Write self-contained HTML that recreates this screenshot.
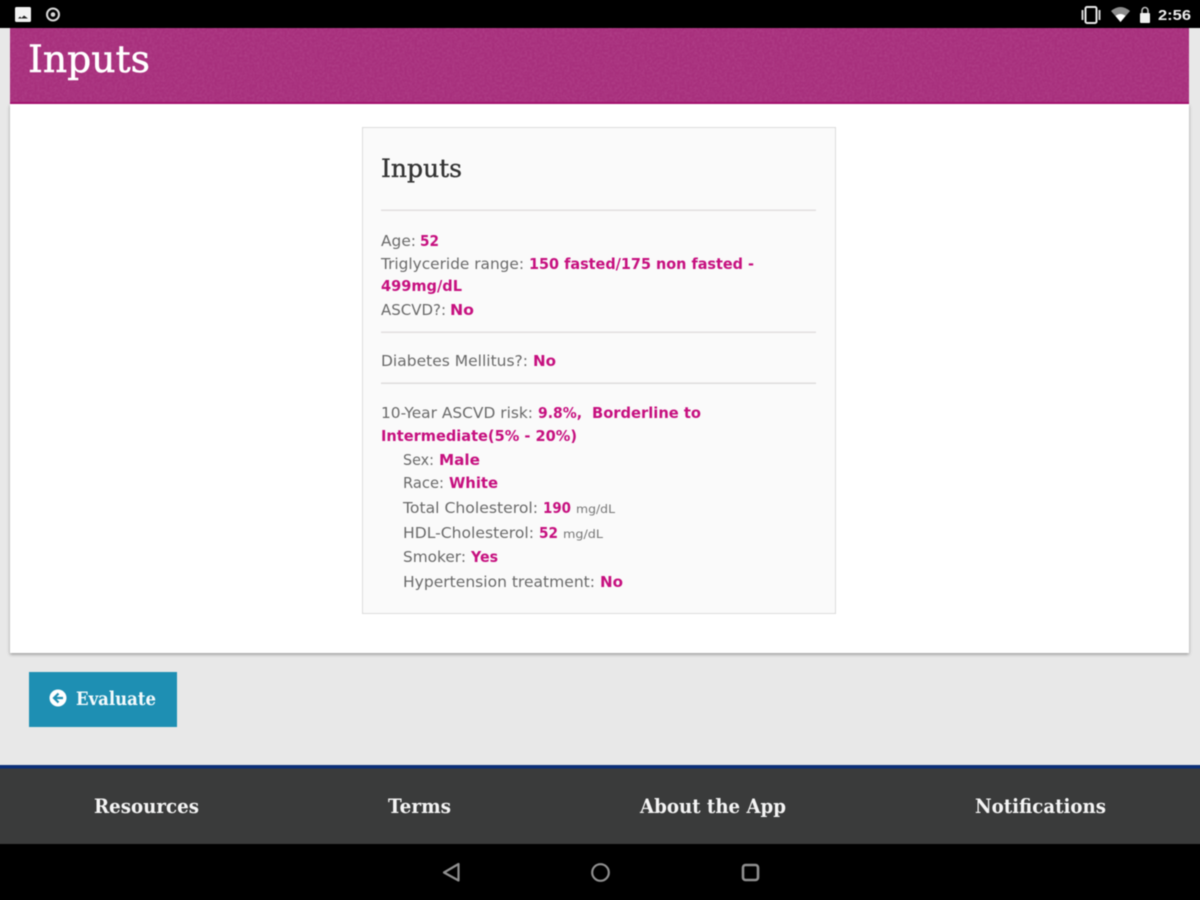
<!DOCTYPE html>
<html>
<head>
<meta charset="utf-8">
<title>Inputs</title>
<style>
html,body{margin:0;padding:0;width:1200px;height:900px;overflow:hidden;background:#e8e8e8}
#wrap{position:relative;width:1200px;height:900px;overflow:hidden}
svg{display:block;position:absolute;left:-6px;top:-6px;filter:blur(.5px)}
.s{font-family:"DejaVu Serif","Liberation Serif",serif}
.b{font-family:"DejaVu Sans","Liberation Sans",sans-serif;font-size:15px;fill:#6a6a6a}
.m{font-family:"DejaVu Sans","Liberation Sans",sans-serif;font-size:15px;font-weight:bold;fill:#c6107f}
.u{font-family:"DejaVu Sans","Liberation Sans",sans-serif;font-size:11.5px;fill:#777}
.f{font-family:"DejaVu Serif","Liberation Serif",serif;font-size:20px;fill:#f4f4f4;font-weight:bold}
</style>
</head>
<body>
<div id="wrap">
<svg width="1212" height="912" viewBox="-6 -6 1212 912" xmlns="http://www.w3.org/2000/svg">
<defs>
<filter id="noise" x="0" y="0" width="100%" height="100%">
<feTurbulence type="fractalNoise" baseFrequency="0.4" numOctaves="2" seed="4"/>
<feColorMatrix values="0 0 0 0 1  0 0 0 0 .6  0 0 0 0 .85  .5 0 0 0 -.16"/>
</filter>
<filter id="sh" x="-2%" y="-2%" width="104%" height="104%">
<feDropShadow dx="0" dy="1.5" stdDeviation="1.5" flood-color="#000" flood-opacity=".35"/>
</filter>
</defs>

<rect x="-6" y="-6" width="1212" height="912" fill="#e8e8e8"/>

<!-- white panel -->
<rect x="10" y="104" width="1179" height="549" fill="#fff" filter="url(#sh)"/>

<!-- header -->
<rect x="10" y="28" width="1179" height="76" fill="#a72f7c"/>
<rect x="10" y="28" width="1179" height="74" filter="url(#noise)" opacity=".35"/>
<rect x="10" y="102" width="1179" height="2" fill="#a3126e"/>
<text class="s" x="28" y="72" font-size="37" fill="#fff" stroke="#fff" stroke-width=".5" textLength="122" lengthAdjust="spacingAndGlyphs">Inputs</text>

<!-- card -->
<rect x="362.500" y="127.500" width="473" height="486" fill="#fafafa" stroke="#dcdcdc"/>
<text class="s" x="381" y="177" font-size="25" fill="#333" stroke="#333" stroke-width=".35" textLength="81" lengthAdjust="spacingAndGlyphs">Inputs</text>
<rect x="381" y="209.500" width="435" height="1.500" fill="#e2dfe0"/>
<rect x="381" y="331.500" width="435" height="1.500" fill="#e2dfe0"/>
<rect x="381" y="382.500" width="435" height="1.500" fill="#dedcdc"/>

<g>
<text class="b" x="381" y="246" textLength="35" lengthAdjust="spacingAndGlyphs">Age:</text>
<text class="m" x="420" y="246" textLength="19" lengthAdjust="spacingAndGlyphs">52</text>
<text class="b" x="381" y="269" textLength="143" lengthAdjust="spacingAndGlyphs">Triglyceride range:</text>
<text class="m" x="529" y="269" textLength="225" lengthAdjust="spacingAndGlyphs">150 fasted/175 non fasted -</text>
<text class="m" x="381" y="291" textLength="81" lengthAdjust="spacingAndGlyphs">499mg/dL</text>
<text class="b" x="381" y="315" textLength="65" lengthAdjust="spacingAndGlyphs">ASCVD?:</text>
<text class="m" x="450" y="315" textLength="24" lengthAdjust="spacingAndGlyphs">No</text>
<text class="b" x="381" y="366" textLength="147" lengthAdjust="spacingAndGlyphs">Diabetes Mellitus?:</text>
<text class="m" x="533" y="366" textLength="23" lengthAdjust="spacingAndGlyphs">No</text>
<text class="b" x="381" y="418" textLength="152" lengthAdjust="spacingAndGlyphs">10-Year ASCVD risk:</text>
<text class="m" x="538" y="418" textLength="44" lengthAdjust="spacingAndGlyphs">9.8%,</text>
<text class="m" x="592" y="418" textLength="109" lengthAdjust="spacingAndGlyphs">Borderline to</text>
<text class="m" x="381" y="441" textLength="196" lengthAdjust="spacingAndGlyphs">Intermediate(5% - 20%)</text>
<text class="b" x="403" y="465" textLength="31" lengthAdjust="spacingAndGlyphs">Sex:</text>
<text class="m" x="439" y="465" textLength="41" lengthAdjust="spacingAndGlyphs">Male</text>
<text class="b" x="403" y="488" textLength="41" lengthAdjust="spacingAndGlyphs">Race:</text>
<text class="m" x="449" y="488" textLength="49" lengthAdjust="spacingAndGlyphs">White</text>
<text class="b" x="403" y="513" textLength="135" lengthAdjust="spacingAndGlyphs">Total Cholesterol:</text>
<text class="m" x="543" y="513" textLength="28" lengthAdjust="spacingAndGlyphs">190</text>
<text class="u" x="576" y="513" textLength="39" lengthAdjust="spacingAndGlyphs">mg/dL</text>
<text class="b" x="403" y="538" textLength="131" lengthAdjust="spacingAndGlyphs">HDL-Cholesterol:</text>
<text class="m" x="539" y="538" textLength="19" lengthAdjust="spacingAndGlyphs">52</text>
<text class="u" x="563" y="538" textLength="40" lengthAdjust="spacingAndGlyphs">mg/dL</text>
<text class="b" x="403" y="562" textLength="63" lengthAdjust="spacingAndGlyphs">Smoker:</text>
<text class="m" x="471" y="562" textLength="27" lengthAdjust="spacingAndGlyphs">Yes</text>
<text class="b" x="403" y="587" textLength="192" lengthAdjust="spacingAndGlyphs">Hypertension treatment:</text>
<text class="m" x="600" y="587" textLength="23" lengthAdjust="spacingAndGlyphs">No</text>
</g>

<!-- evaluate button -->
<rect x="29" y="672" width="148" height="55" fill="#1e8fb3"/>
<g>
<circle cx="58" cy="698" r="8.500" fill="#fff"/>
<path d="M58.500 693.500 L54 698 L58.500 702.500 M54.500 698 H63" fill="none" stroke="#1e8fb3" stroke-width="2.200"/>
<text class="s" x="76" y="705" font-size="19" font-weight="bold" fill="#f4fafc" textLength="80" lengthAdjust="spacingAndGlyphs">Evaluate</text>
</g>

<!-- footer -->
<rect x="-6" y="765" width="1212" height="3.500" fill="#0b2f78"/>
<rect x="-6" y="768.500" width="1212" height="75.500" fill="#3a3b3b"/>
<g>
<text class="f" x="94" y="813" textLength="105" lengthAdjust="spacingAndGlyphs">Resources</text>
<text class="f" x="388" y="813" textLength="63" lengthAdjust="spacingAndGlyphs">Terms</text>
<text class="f" x="640" y="813" textLength="146" lengthAdjust="spacingAndGlyphs">About the App</text>
<text class="f" x="975" y="813" textLength="131" lengthAdjust="spacingAndGlyphs">Notifications</text>
</g>

<!-- status bar -->
<rect x="-6" y="-6" width="1212" height="34" fill="#000"/>
<g>
<rect x="15" y="7" width="16" height="15" rx="1.500" fill="#f2f2f2"/>
<path d="M18 18.500 L20 16.500 L21.500 18 L24 15.500 L28 18.500 Z" fill="#222"/>
<circle cx="53" cy="14.500" r="6" fill="none" stroke="#d8d8d8" stroke-width="2"/>
<circle cx="53" cy="14.500" r="2.300" fill="#d8d8d8"/>

<rect x="1085.500" y="7" width="11" height="16" rx="1.500" fill="none" stroke="#e8e8e8" stroke-width="2"/>
<path d="M1082.500 10 V20 M1099.500 10 V20" stroke="#cfcfcf" stroke-width="2" fill="none"/>
<path d="M1111 11 Q1120.500 3 1130 11 L1120.500 22 Z" fill="#8c8c8c"/>
<path d="M1115.500 16 Q1120.500 12 1125.500 16 L1120.500 22 Z" fill="#fff"/>
<rect x="1140" y="13" width="10" height="10" rx="1" fill="#f0f0f0"/>
<path d="M1142 13 V10.500 a3 3 0 0 1 6 0 V13" fill="none" stroke="#bdbdbd" stroke-width="1.600"/>
<text x="1158" y="20" font-family="'Liberation Sans',sans-serif" font-weight="bold" font-size="15" fill="#ededed" textLength="33" lengthAdjust="spacingAndGlyphs">2:56</text>
</g>

<!-- nav bar -->
<rect x="-6" y="844" width="1212" height="62" fill="#000"/>
<g fill="none" stroke="#8f8f8f" stroke-width="2.200" stroke-linejoin="round">
<path d="M458.500 864 V880.500 L444 872.500 Z"/>
<circle cx="600.500" cy="872.500" r="8.300"/>
<rect x="743" y="865" width="15" height="15" rx="2.500" stroke-width="2.600"/>
</g>
</svg>
</div>
</body>
</html>
